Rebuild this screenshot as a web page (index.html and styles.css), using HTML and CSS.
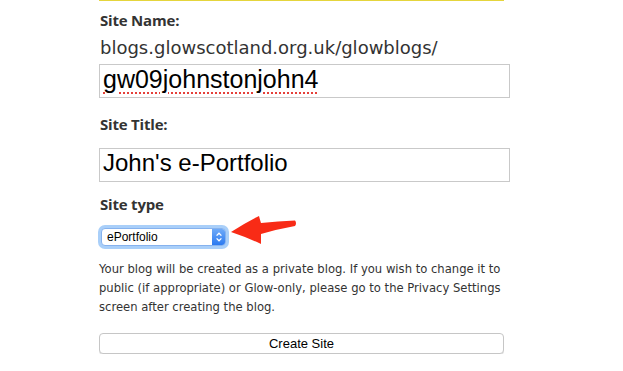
FILE: index.html
```html
<!DOCTYPE html>
<html>
<head>
<meta charset="utf-8">
<link rel="stylesheet" href="styles.css">
</head>
<body>
<div class="page">
  <div class="form">
    <div class="rule"></div>
    <label class="label name">Site Name:</label>
    <div class="url">blogs.glowscotland.org.uk/glowblogs/</div>
    <div class="input"><span class="misspelt">gw09johnstonjohn4</span></div>
    <label class="label title-label">Site Title:</label>
    <div class="input title">John's e-Portfolio</div>
    <label class="label type">Site type</label>
    <div class="select-row">
      <div class="select">
        <span class="select-text">ePortfolio</span>
        <span class="stepper">
          <svg width="8" height="12" viewBox="0 0 8 12"><path d="M1.6 4.6 L4 2.2 L6.4 4.6 M1.6 7.4 L4 9.8 L6.4 7.4" fill="none" stroke="#fff" stroke-width="1.3"/></svg>
        </span>
      </div>
      <svg class="arrow" width="68" height="34" viewBox="0 0 68 34">
        <path d="M0 19 Q14 10 28 3 Q29 7 30 10 Q47 8 64 7.5 Q66 10 64 13 Q47 16 30 21 Q30 26 30 31 Q15 24 0 19 Z" fill="#f82b16"/>
      </svg>
    </div>
    <p class="note">Your blog will be created as a private blog. If you wish to change it to public (if appropriate) or Glow-only, please go to the Privacy Settings screen after creating the blog.</p>
    <button class="button">Create Site</button>
  </div>
</div>
</body>
</html>
```
FILE: styles.css
```css
html, body {
  margin: 0;
  padding: 0;
  background: #fff;
}
.page {
  padding-left: 99px;
}
.form {
  width: 411px;
  display: flex;
  flex-direction: column;
  align-items: flex-start;
  font-family: "Open Sans", sans-serif;
  color: #333;
}
.rule {
  width: 405px;
  height: 1px;
  background: #e5d53c;
}
.label {
  font-weight: bold;
  font-size: 15px;
  line-height: 20px;
  height: 20px;
  letter-spacing: -0.2px;
  padding-left: 1px;
  color: #333;
}
.label.name {
  margin-top: 9px;
}
.label.title-label {
  margin-top: 16px;
}
.label.type {
  margin-top: 12px;
}
.url {
  font-family: "DejaVu Sans", sans-serif;
  font-size: 18px;
  line-height: 24px;
  margin-top: 6px;
  padding-left: 1px;
  color: #333;
}
.input {
  box-sizing: border-box;
  width: 411px;
  height: 34px;
  border: 1px solid #c9c9c9;
  margin-top: 4px;
  padding: 0 3px;
  font-family: "Liberation Sans", Arial, sans-serif;
  font-size: 25px;
  line-height: 28px;
  color: #000;
  white-space: nowrap;
}
.input.title {
  margin-top: 14px;
  font-size: 24px;
}
.misspelt {
  text-decoration: underline dotted #e5403a;
  text-decoration-thickness: 2px;
  text-underline-offset: 4px;
}
.select-row {
  position: relative;
  display: flex;
  height: 18px;
  margin-top: 14px;
  margin-left: 2px;
}
.select {
  box-sizing: border-box;
  width: 125px;
  height: 18px;
  border-radius: 4px;
  box-shadow: 0 0 0 3px #a9cff9;
  border: 1px solid #86b2ee;
  display: flex;
  align-items: stretch;
  background: #fff;
  overflow: hidden;
}
.select-text {
  flex: 1;
  font-family: "Liberation Sans", Arial, sans-serif;
  font-size: 12px;
  line-height: 16px;
  color: #000;
  padding-left: 5px;
}
.stepper {
  width: 13px;
  background: linear-gradient(#6eaaf8, #2c7af0);
  display: flex;
  align-items: center;
  justify-content: center;
}
.arrow {
  position: absolute;
  left: 130px;
  top: -15px;
}
.note {
  margin: 14px 0 0;
  font-family: "DejaVu Sans", sans-serif;
  font-size: 11.6px;
  line-height: 19px;
  color: #333;
  width: 411px;
}
.button {
  box-sizing: border-box;
  width: 405px;
  height: 21px;
  margin-top: 16px;
  border: 1px solid #c6c6c6;
  border-radius: 4px;
  background: #fff;
  box-shadow: 0 1px 0 #e4e4e4;
  font-family: "Liberation Sans", Arial, sans-serif;
  font-size: 13px;
  line-height: 19px;
  color: #000;
  padding: 0;
}
```
